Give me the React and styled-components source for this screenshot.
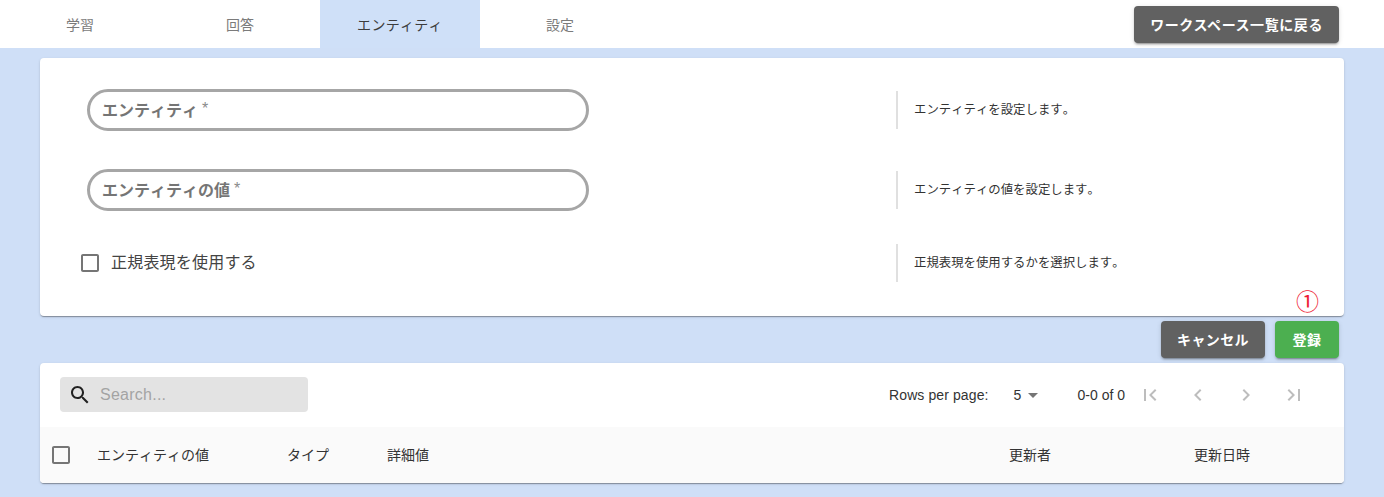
import React from 'react';
import styled, { createGlobalStyle } from 'styled-components';

const FONT = `"Liberation Sans", "Noto Sans CJK JP", sans-serif`;

const GlobalStyle = createGlobalStyle`
  html, body {
    margin: 0;
    padding: 0;
    background: #cfdff7;
    font-family: ${FONT};
    font-kerning: none;
  }
  * { box-sizing: border-box; }
`;

const Page = styled.div`
  width: 1384px;
  height: 497px;
  overflow: hidden;
  background: #cfdff7;
`;

const Header = styled.header`
  display: flex;
  align-items: center;
  justify-content: space-between;
  height: 48px;
  padding-right: 45px;
  background: #fff;
`;

const Tabs = styled.nav`
  display: flex;
  height: 100%;
`;

const Tab = styled.div`
  display: flex;
  align-items: center;
  justify-content: center;
  width: 160px;
  padding-bottom: 1px;
  font-size: 14px;
  letter-spacing: ${props => (props.$active ? '0.3px' : '0')};
  color: ${props => (props.$active ? '#3c3c3c' : '#7b7b7b')};
  background: ${props => (props.$active ? '#cfe0f8' : '#fff')};
`;

const Button = styled.button`
  min-width: 64px;
  height: 37px;
  padding: 0 16px 1px;
  border: 0;
  border-radius: 4px;
  font-family: ${FONT};
  font-size: 14px;
  font-weight: 700;
  letter-spacing: 0.4px;
  color: #fff;
  background: ${props => props.$color || '#616161'};
  box-shadow: 0 3px 1px -2px rgba(0,0,0,.2), 0 2px 2px 0 rgba(0,0,0,.14), 0 1px 5px 0 rgba(0,0,0,.12);
`;

const BackButton = styled(Button)`
  letter-spacing: 0.58px;
`;

const Content = styled.main`
  padding: 10px 40px 0;
`;

const Card = styled.section`
  position: relative;
  border-radius: 4px;
  background: #fff;
  overflow: hidden;
  box-shadow: 0 2px 1px -1px rgba(0,0,0,.2), 0 1px 1px 0 rgba(0,0,0,.14), 0 1px 3px 0 rgba(0,0,0,.12);
`;

const FormCard = styled(Card)`
  height: 258px;
  padding-top: 12px;
`;

const FormRow = styled.div`
  display: grid;
  grid-template-columns: 856px 1fr;
  align-items: center;
  height: ${props => props.$height || '80px'};
`;

const Field = styled.div`
  display: flex;
  align-items: center;
  width: 502px;
  height: 42px;
  margin-left: 47px;
  padding: 0 0 3px 12px;
  border: 3px solid #a6a6a6;
  border-radius: 21px;
`;

const FieldLabel = styled.span`
  font-size: 16px;
  font-weight: 700;
  color: #757575;
`;

const Required = styled.span`
  margin-left: 4px;
  font-size: 16px;
  color: #8a8a8a;
`;

const CheckLabel = styled.label`
  display: flex;
  align-items: center;
  gap: 9px;
  margin-left: 38px;
  font-size: 16px;
  color: #444;
`;

const CheckText = styled.span`
  padding-bottom: 5px;
  letter-spacing: 0.2px;
`;

const Help = styled.p`
  display: flex;
  align-items: center;
  height: 38px;
  margin: 0;
  padding: 0 0 3px 16px;
  border-left: 2px solid #e0e0e0;
  font-size: 12.4px;
  color: #333;
`;

const Marker = styled.span`
  position: absolute;
  right: 25px;
  bottom: 1px;
  font-size: 23px;
  line-height: 26px;
  color: #ee1c34;
`;

const Actions = styled.div`
  display: flex;
  justify-content: flex-end;
  gap: 10px;
  padding: 5px 5px 5px 0;
`;

const Toolbar = styled.div`
  display: flex;
  align-items: center;
  justify-content: space-between;
  height: 64px;
  padding: 0 26px 0 20px;
`;

const Search = styled.div`
  display: flex;
  align-items: center;
  gap: 8px;
  width: 248px;
  height: 35px;
  margin-bottom: 1px;
  padding-left: 8px;
  border-radius: 4px;
  background: #e3e3e3;
`;

const SearchInput = styled.input`
  flex: 1;
  min-width: 0;
  border: 0;
  outline: 0;
  padding: 0;
  font-family: ${FONT};
  font-size: 16px;
  letter-spacing: 0.25px;
  background: transparent;
  &::placeholder {
    color: #a3a3a3;
    opacity: 1;
  }
`;

const Pagination = styled.div`
  display: flex;
  align-items: center;
  font-size: 14px;
  color: #333;
`;

const RowsLabel = styled.span`
  letter-spacing: 0.1px;
`;

const PageSelect = styled.div`
  display: flex;
  align-items: center;
  margin-left: 25px;
  width: 64px;
`;

const PageRange = styled.span`
  margin-right: 1px;
`;

const IconButton = styled.span`
  display: flex;
  align-items: center;
  justify-content: center;
  width: 48px;
  height: 48px;
`;

const HeadRow = styled.div`
  display: grid;
  grid-template-columns: 57px 190px 100px 622px 185px 1fr;
  align-items: center;
  height: 56px;
  background: #fafafa;
  font-size: 14px;
  color: #333;
`;

const HeadCheck = styled.div`
  display: flex;
  padding-left: 9px;
`;

const HeadCell = styled.span`
  padding-bottom: 2px;
`;

const Glyph = ({ d, size = 24, color = 'currentColor' }) => (
  <svg width={size} height={size} viewBox="0 0 24 24" fill={color} style={{ display: 'block' }}>
    <path d={d} />
  </svg>
);

const BOX = 'M19 5v14H5V5h14m0-2H5c-1.1 0-2 .9-2 2v14c0 1.1.9 2 2 2h14c1.1 0 2-.9 2-2V5c0-1.1-.9-2-2-2z';
const SEARCH = 'M15.5 14h-.79l-.28-.27C15.41 12.59 16 11.11 16 9.5 16 5.91 13.09 3 9.5 3S3 5.91 3 9.5 5.91 16 9.5 16c1.61 0 3.09-.59 4.23-1.57l.27.28v.79l5 4.99L20.49 19l-4.99-5zm-6 0C7.01 14 5 11.99 5 9.5S7.01 5 9.5 5 14 7.01 14 9.5 11.99 14 9.5 14z';
const DROP = 'M7 10l5 5 5-5z';
const PAGE_ICONS = [
  'M18.41 16.59L13.82 12l4.59-4.59L17 6l-6 6 6 6zM6 6h2v12H6z',
  'M15.41 7.41L14 6l-6 6 6 6 1.41-1.41L10.83 12z',
  'M10 6L8.59 7.41 13.17 12l-4.58 4.59L10 18l6-6z',
  'M5.59 7.41L10.18 12l-4.59 4.59L7 18l6-6-6-6zM16 6h2v12h-2z',
];

const TABS = ['学習', '回答', 'エンティティ', '設定'];
const COLUMNS = ['エンティティの値', 'タイプ', '詳細値', '更新者', '更新日時'];

const App = () => (
  <Page>
    <GlobalStyle />
    <Header>
      <Tabs>
        {TABS.map(tab => (
          <Tab key={tab} $active={tab === 'エンティティ'}>{tab}</Tab>
        ))}
      </Tabs>
      <BackButton>ワークスペース一覧に戻る</BackButton>
    </Header>
    <Content>
      <FormCard>
        <FormRow>
          <Field>
            <FieldLabel>エンティティ</FieldLabel>
            <Required>*</Required>
          </Field>
          <Help>エンティティを設定します。</Help>
        </FormRow>
        <FormRow>
          <Field>
            <FieldLabel>エンティティの値</FieldLabel>
            <Required>*</Required>
          </Field>
          <Help>エンティティの値を設定します。</Help>
        </FormRow>
        <FormRow $height="66px">
          <CheckLabel>
            <Glyph d={BOX} color="#757575" />
            <CheckText>正規表現を使用する</CheckText>
          </CheckLabel>
          <Help>正規表現を使用するかを選択します。</Help>
        </FormRow>
        <Marker>①</Marker>
      </FormCard>
      <Actions>
        <Button>キャンセル</Button>
        <Button $color="#4caf50">登録</Button>
      </Actions>
      <Card>
        <Toolbar>
          <Search>
            <Glyph d={SEARCH} color="#222" />
            <SearchInput placeholder="Search..." />
          </Search>
          <Pagination>
            <RowsLabel>Rows per page:</RowsLabel>
            <PageSelect>
              5
              <Glyph d={DROP} color="#757575" />
            </PageSelect>
            <PageRange>0-0 of 0</PageRange>
            {PAGE_ICONS.map(d => (
              <IconButton key={d}>
                <Glyph d={d} color="#bdbdbd" />
              </IconButton>
            ))}
          </Pagination>
        </Toolbar>
        <HeadRow>
          <HeadCheck>
            <Glyph d={BOX} color="#757575" />
          </HeadCheck>
          {COLUMNS.map(col => (
            <HeadCell key={col}>{col}</HeadCell>
          ))}
        </HeadRow>
      </Card>
    </Content>
  </Page>
);

export default App;
